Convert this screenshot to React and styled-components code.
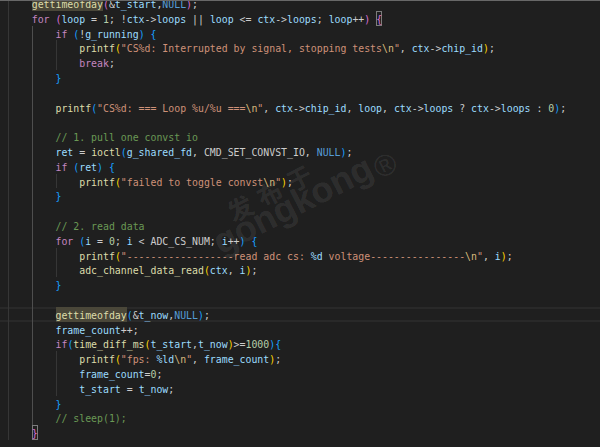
import React from "react";
import styled, { createGlobalStyle } from "styled-components";

const GlobalStyle = createGlobalStyle`
  html, body {
    margin: 0;
    padding: 0;
    background: #1f1f1f;
    overflow: hidden;
  }
`;

// token colours (Dark Modern + bracket pair colouring)
const palette = {
  t: "#cccccc",
  k: "#c586c0",
  f: "#dcdcaa",
  F: "#dcdcaa",
  v: "#9cdcfe",
  s: "#ce9178",
  e: "#d7ba7d",
  fm: "#9cdcfe",
  n: "#b5cea8",
  m: "#569cd6",
  c: "#6a9955",
  b1: "#da70d6",
  B1: "#da70d6",
  b2: "#179fff",
  b3: "#ffd700",
};

const Editor = styled.div`
  position: relative;
  width: 600px;
  height: 447px;
  overflow: hidden;
  background: #1f1f1f;

  &::before {
    content: "";
    position: absolute;
    left: 0;
    right: 0;
    top: 0;
    height: 1px;
    background: #686868;
    z-index: 3;
  }
`;

const Code = styled.div`
  margin-top: -4px;
  font-family: "DejaVu Sans Mono", "Liberation Mono", monospace;
  font-size: 9.87px;
  color: #cccccc;
`;

const Line = styled.div`
  display: flex;
  height: 14.8px;
  line-height: 14.8px;
  padding-left: 8px;
  white-space: pre;
  box-shadow: ${(p) =>
    p.$current ? "inset 0 2px 0 #292929, inset 0 -2px 0 #292929" : "none"};
`;

const Guide = styled.span`
  box-shadow: inset 1px 0 0 ${(p) => (p.$active ? "#4e4e4e" : "#363636")};
`;

const Token = styled.span`
  padding-top: 2px;
  color: ${(p) => palette[p.$kind] || palette.t};
  background: ${(p) => (p.$kind === "F" ? "#4a4739" : "transparent")};
  box-shadow: ${(p) => (p.$kind === "B1" ? "inset 0 0 0 1px #7c7c7c" : "none")};
`;

const Watermark = styled.div`
  position: absolute;
  left: 200px;
  top: 214px;
  transform: rotate(-27deg);
  transform-origin: 0 0;
  color: rgba(255, 255, 255, 0.085);
  line-height: 1;
  pointer-events: none;
  z-index: 2;
`;

const WmCn = styled.div`
  font-family: "Noto Sans CJK SC", sans-serif;
  font-size: 25px;
  font-weight: 700;
  letter-spacing: 8px;
  padding-left: 26px;
`;

const WmEn = styled.div`
  display: flex;
  align-items: flex-start;
  margin-top: -9.5px;
  font-family: "Liberation Sans", sans-serif;
  font-size: 36px;
  font-weight: 700;
`;

const WmReg = styled.span`
  font-size: 30px;
  font-weight: 400;
  margin-left: 2px;
  margin-top: 10px;
`;

const lines = [
  { g: 1, s: "«F|gettimeofday»«b1|(»&«v|t_start»,«m|NULL»«b1|)»;" },
  { g: 1, s: "«k|for» «b1|(»«v|loop» = «n|1»; !«v|ctx»->«v|loops» || «v|loop» <= «v|ctx»->«v|loops»; «v|loop»++«b1|)» «B1|{»" },
  { g: 2, s: "«k|if» «b2|(»!«v|g_running»«b2|)» «b2|{»" },
  { g: 3, s: "«f|printf»«b3|(»«s|\"CS%d: Interrupted by signal, stopping tests»«e|\\n»«s|\"», «v|ctx»->«v|chip_id»«b3|)»;" },
  { g: 3, s: "«k|break»;" },
  { g: 2, s: "«b2|}»" },
  { g: 2, s: "" },
  { g: 2, s: "«f|printf»«b2|(»«s|\"CS%d: === Loop %u/%u ===»«e|\\n»«s|\"», «v|ctx»->«v|chip_id», «v|loop», «v|ctx»->«v|loops» ? «v|ctx»->«v|loops» : «n|0»«b2|)»;" },
  { g: 2, s: "" },
  { g: 2, s: "«c|// 1. pull one convst io»" },
  { g: 2, s: "«v|ret» = «f|ioctl»«b2|(»«v|g_shared_fd», CMD_SET_CONVST_IO, «m|NULL»«b2|)»;" },
  { g: 2, s: "«k|if» «b2|(»«v|ret»«b2|)» «b2|{»" },
  { g: 3, s: "«f|printf»«b3|(»«s|\"failed to toggle convst»«e|\\n»«s|\"»«b3|)»;" },
  { g: 2, s: "«b2|}»" },
  { g: 2, s: "" },
  { g: 2, s: "«c|// 2. read data»" },
  { g: 2, s: "«k|for» «b2|(»«v|i» = «n|0»; «v|i» < ADC_CS_NUM; «v|i»++«b2|)» «b2|{»" },
  { g: 3, s: "«f|printf»«b3|(»«s|\"------------------read adc cs: »«fm|%d»«s| voltage----------------»«e|\\n»«s|\"», «v|i»«b3|)»;" },
  { g: 3, s: "«f|adc_channel_data_read»«b3|(»«v|ctx», «v|i»«b3|)»;" },
  { g: 2, s: "«b2|}»" },
  { g: 2, s: "" },
  { g: 2, s: "«F|gettimeofday»«b2|(»&«v|t_now»,«m|NULL»«b2|)»;", cur: true },
  { g: 2, s: "«v|frame_count»++;" },
  { g: 2, s: "«k|if»«b2|(»«f|time_diff_ms»«b3|(»«v|t_start»,«v|t_now»«b3|)»>=«n|1000»«b2|)»«b2|{»" },
  { g: 3, s: "«f|printf»«b3|(»«s|\"fps: »«fm|%ld»«e|\\n»«s|\"», «v|frame_count»«b3|)»;" },
  { g: 3, s: "«v|frame_count»=«n|0»;" },
  { g: 3, s: "«v|t_start» = «v|t_now»;" },
  { g: 2, s: "«b2|}»" },
  { g: 2, s: "«c|// sleep(1);»" },
  { g: 1, s: "«B1|}»" },
];

const parse = (src) => {
  const out = [];
  const re = /«(\w+)\|([^»]*)»/g;
  let last = 0;
  let m;
  while ((m = re.exec(src))) {
    if (m.index > last) out.push(["t", src.slice(last, m.index)]);
    out.push([m[1], m[2]]);
    last = re.lastIndex;
  }
  if (last < src.length) out.push(["t", src.slice(last)]);
  return out;
};

const CodeLine = ({ g, s, cur }) => (
  <Line $current={cur}>
    {Array.from({ length: g }, (_, i) => (
      <Guide key={i} $active={i === 1}>
        {"    "}
      </Guide>
    ))}
    {parse(s).map(([kind, text], i) => (
      <Token key={i} $kind={kind}>
        {text}
      </Token>
    ))}
  </Line>
);

export default function App() {
  return (
    <Editor>
      <GlobalStyle />
      <Code>
        {lines.map((l, i) => (
          <CodeLine key={i} {...l} />
        ))}
      </Code>
      <Watermark>
        <WmCn>发布于</WmCn>
        <WmEn>
          gongkong
          <WmReg>®</WmReg>
        </WmEn>
      </Watermark>
    </Editor>
  );
}
